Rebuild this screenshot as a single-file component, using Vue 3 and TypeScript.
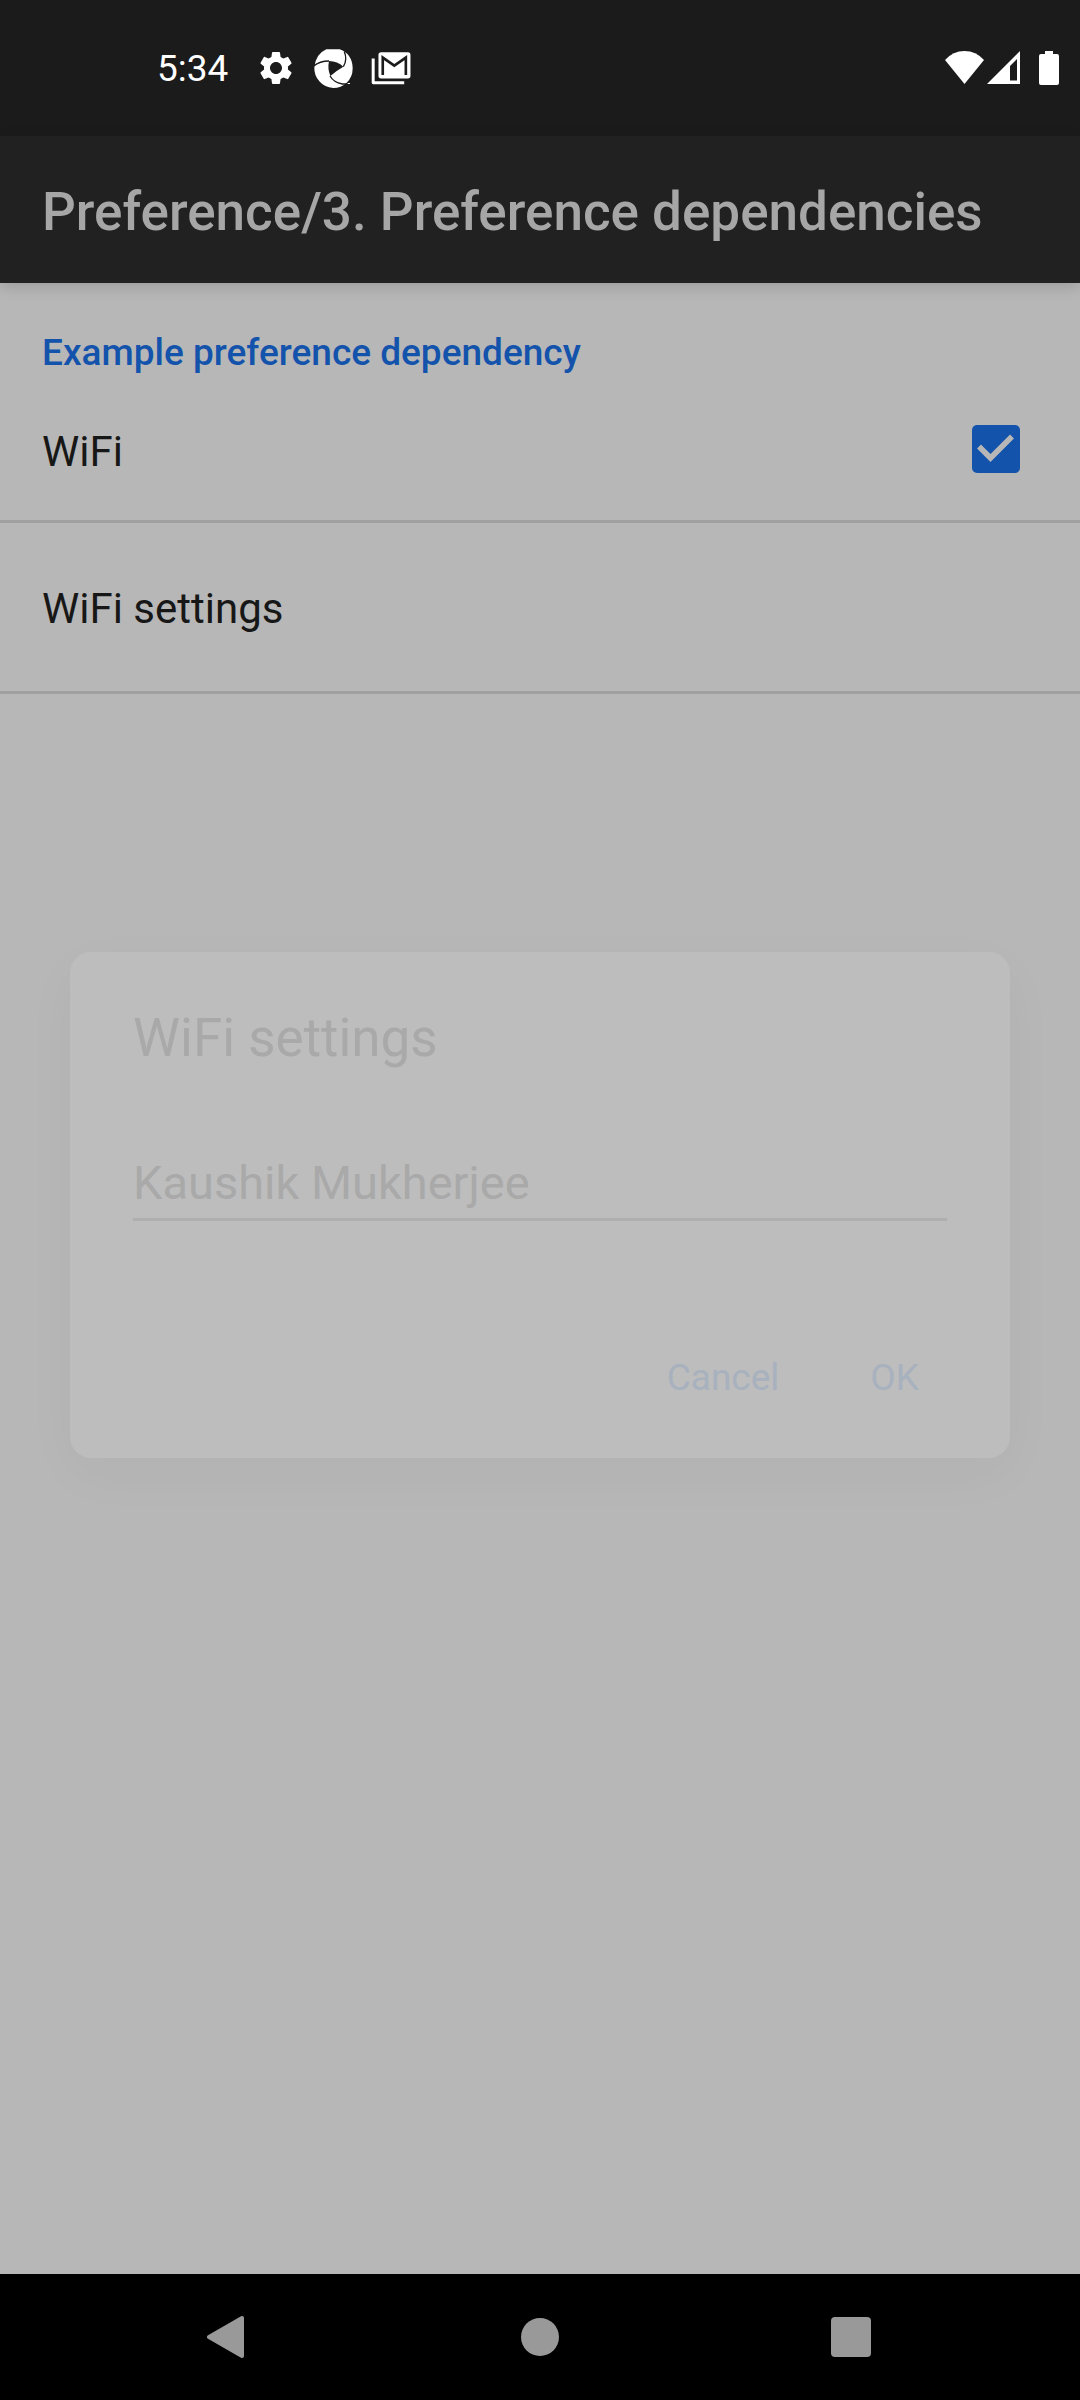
<script setup lang="ts">
import { ref } from 'vue'

const wifiEnabled = ref<boolean>(true)
const networkName = ref<string>('Kaushik Mukherjee')
</script>

<template>
  <div class="screen">
    <header class="status-bar">
      <div class="status-group status-left">
        <time class="clock">5:34</time>
        <svg class="icon-gear" viewBox="0 0 24 24" aria-hidden="true">
          <path fill="#fff" d="M19.14 12.94c.04-.3.06-.61.06-.94 0-.32-.02-.64-.07-.94l2.03-1.58a.49.49 0 0 0 .12-.61l-1.92-3.32a.488.488 0 0 0-.59-.22l-2.39.96c-.5-.38-1.03-.7-1.62-.94l-.36-2.54a.484.484 0 0 0-.48-.41h-3.84c-.24 0-.43.17-.47.41l-.36 2.54c-.59.24-1.13.57-1.62.94l-2.39-.96c-.22-.08-.47 0-.59.22L2.74 8.87c-.12.21-.08.47.12.61l2.03 1.58c-.05.3-.09.63-.09.94s.02.64.07.94l-2.03 1.58a.49.49 0 0 0-.12.61l1.92 3.32c.12.22.37.29.59.22l2.39-.96c.5.38 1.03.7 1.62.94l.36 2.54c.05.24.24.41.48.41h3.84c.24 0 .44-.17.47-.41l.36-2.54c.59-.24 1.13-.56 1.62-.94l2.39.96c.22.08.47 0 .59-.22l1.92-3.32c.12-.22.07-.47-.12-.61l-2.01-1.58zM12 15.6c-1.98 0-3.6-1.62-3.6-3.6s1.62-3.6 3.6-3.6 3.6 1.62 3.6 3.6-1.62 3.6-3.6 3.6z" />
        </svg>
        <svg class="icon-shutter" viewBox="0 0 120 120" aria-hidden="true">
          <path fill="#fff" d="M40 4H80Q118 18 119 61Q119 88 101 104Q84 120 61 120Q34 118 19 100Q3 82 4 58Q8 18 40 4Z" />
          <path fill="#1b1b1b" d="M48 39Q74 40 91 56Q70 68 52 84Q43 62 48 39Z" />
          <path fill="none" stroke="#1b1b1b" stroke-width="4" d="M2 54Q20 39 48 39M91 56Q104 34 94 11M51 84Q62 103 88 108H108" />
          <path fill="#fff" d="M104 105h7v3h-7z" />
        </svg>
        <svg class="icon-mail" viewBox="0 0 120 100" aria-hidden="true">
          <path fill="none" stroke="#fff" stroke-width="9" stroke-linejoin="round" d="M6 20V93H100" />
          <rect x="22" y="1" width="97" height="79" rx="8" fill="#fff" />
          <path fill="none" stroke="#1b1b1b" stroke-width="8" d="M35 70V17L70 41L105 17V70" />
        </svg>
      </div>
      <div class="status-group status-right">
        <svg class="icon-wifi" viewBox="0 0 39 34" aria-hidden="true">
          <path fill="#fff" d="M0 9Q8 0 19.500 0T39 9L19.500 33Z" />
        </svg>
        <svg class="icon-signal" viewBox="0 0 33 34" aria-hidden="true">
          <path fill="#fff" fill-rule="evenodd" d="M33 0V33H0ZM30 8L23 15V29.500H30Z" />
        </svg>
        <svg class="icon-battery" viewBox="0 0 20 34" aria-hidden="true">
          <path fill="#fff" d="M6 0h8v3h4q2 0 2 2v27q0 2-2 2H2q-2 0-2-2V5q0-2 2-2h4z" />
        </svg>
      </div>
    </header>

    <div class="stage">
      <div class="app-bar">
        <h1 class="app-title">Preference/3. Preference dependencies</h1>
      </div>

      <main class="preferences">
        <h2 class="category">Example preference dependency</h2>
        <label class="row row-first">
          <span>WiFi</span>
          <span class="check">
            <input v-model="wifiEnabled" type="checkbox" class="check-input" />
            <svg v-if="wifiEnabled" class="check-mark" viewBox="0 0 48 48" aria-hidden="true">
              <path fill="none" stroke="#b7b7b7" stroke-width="5.500" d="M7 21.500L18.500 33L40 11.500" />
            </svg>
          </span>
        </label>
        <button type="button" class="row">WiFi settings</button>
      </main>

      <div class="overlay">
        <form class="dialog" role="dialog" aria-labelledby="dialog-title" @submit.prevent>
          <label id="dialog-title" class="dialog-title" for="network">WiFi settings</label>
          <input id="network" v-model="networkName" class="dialog-input" type="text" />
          <div class="dialog-actions">
            <button type="button" class="dialog-button">Cancel</button>
            <button type="submit" class="dialog-button">OK</button>
          </div>
        </form>
      </div>
    </div>

    <nav class="nav-bar">
      <button type="button" class="nav-button" aria-label="Back">
        <svg class="nav-icon" viewBox="0 0 44 44" aria-hidden="true">
          <path fill="#999" stroke="#999" stroke-width="4" stroke-linejoin="round" d="M2 22L35 3V41Z" />
        </svg>
      </button>
      <button type="button" class="nav-button" aria-label="Home">
        <svg class="nav-icon" viewBox="0 0 44 44" aria-hidden="true">
          <circle cx="22" cy="22" r="19" fill="#999" />
        </svg>
      </button>
      <button type="button" class="nav-button" aria-label="Recent apps">
        <svg class="nav-icon" viewBox="0 0 44 44" aria-hidden="true">
          <rect x="2" y="2" width="40" height="40" rx="4" fill="#999" />
        </svg>
      </button>
    </nav>
  </div>
</template>

<style>
body {
  margin: 0;
  background: #b7b7b7;
}
</style>

<style scoped>
.screen {
  display: flex;
  flex-direction: column;
  min-height: 100vh;
  background: #b7b7b7;
  color: #171717;
  font-family: Roboto, sans-serif;
}

button,
input {
  box-sizing: border-box;
  margin: 0;
  border: 0;
  border-radius: 0;
  background: transparent;
  font-family: inherit;
}

.status-bar {
  display: flex;
  align-items: center;
  justify-content: space-between;
  box-sizing: border-box;
  height: 136px;
  padding: 0 21px 0 157px;
  background: #1b1b1b;
}

.status-group {
  display: flex;
  align-items: center;
}

.clock {
  margin-right: 28px;
  padding-top: 2px;
  color: #fff;
  font-size: 37px;
  line-height: 44px;
}

.icon-gear {
  width: 40px;
  height: 40px;
  margin-right: 17px;
}

.icon-shutter {
  width: 40px;
  height: 40px;
  margin-right: 18px;
}

.icon-mail {
  width: 40px;
  height: 33px;
}

.icon-wifi {
  width: 39px;
  height: 34px;
  margin-right: 3px;
}

.icon-signal {
  width: 33px;
  height: 34px;
  margin-right: 19px;
}

.icon-battery {
  width: 20px;
  height: 34px;
}

.stage {
  position: relative;
  display: flex;
  flex: 1;
  flex-direction: column;
}

.app-bar {
  display: flex;
  align-items: center;
  box-sizing: border-box;
  height: 147px;
  padding: 4px 42px 0;
  background: #212121;
  box-shadow: 0 4px 14px rgba(0, 0, 0, 0.15);
}

.app-title {
  margin: 0;
  color: #a6a6a6;
  font-size: 53px;
  font-weight: 500;
  line-height: 62px;
  white-space: nowrap;
}

.preferences {
  display: flex;
  flex-direction: column;
}

.category {
  margin: 0;
  padding: 48px 42px 5px;
  color: #1353ac;
  font-size: 37px;
  font-weight: 500;
  line-height: 44px;
}

.row {
  display: flex;
  align-items: center;
  justify-content: space-between;
  box-sizing: border-box;
  height: 171px;
  padding: 4px 60px 0 42px;
  border-bottom: 3px solid #a0a0a0;
  color: #171717;
  font-size: 42px;
  line-height: 50px;
  text-align: left;
}

.row-first {
  height: 143px;
}

.check {
  display: grid;
  padding-bottom: 6px;
}

.check-input,
.check-mark {
  grid-area: 1 / 1;
  width: 48px;
  height: 48px;
}

.check-input {
  appearance: none;
  border: 5px solid #555;
  border-radius: 5px;
}

.check-input:checked {
  border: 0;
  background: #1353ac;
}

.check-mark {
  pointer-events: none;
}

.overlay {
  position: absolute;
  inset: 0;
  display: flex;
  align-items: center;
  padding: 0 70px;
}

.dialog {
  display: flex;
  flex: 1;
  flex-direction: column;
  padding: 55px 63px 33px;
  border-radius: 21px;
  background: #bdbdbd;
  box-shadow: 0 16px 56px rgba(0, 0, 0, 0.03);
}

.dialog-title {
  color: #a9a9a9;
  font-size: 53px;
  line-height: 62px;
}

.dialog-input {
  height: 72px;
  margin-top: 80px;
  padding: 0 0 2px;
  border-bottom: 3px solid #afafaf;
  color: #a9a9a9;
  font-size: 47px;
  line-height: 56px;
  outline: 0;
}

.dialog-actions {
  display: flex;
  justify-content: flex-end;
  gap: 35px;
  padding-top: 110px;
}

.dialog-button {
  padding: 26px 28px;
  color: #a8b1be;
  font-size: 37px;
  line-height: 42px;
}

.nav-bar {
  display: flex;
  justify-content: center;
  height: 126px;
  background: #000;
}

.nav-button {
  display: grid;
  place-items: center;
  width: 311px;
  padding: 0;
}

.nav-icon {
  width: 44px;
  height: 44px;
}
</style>
